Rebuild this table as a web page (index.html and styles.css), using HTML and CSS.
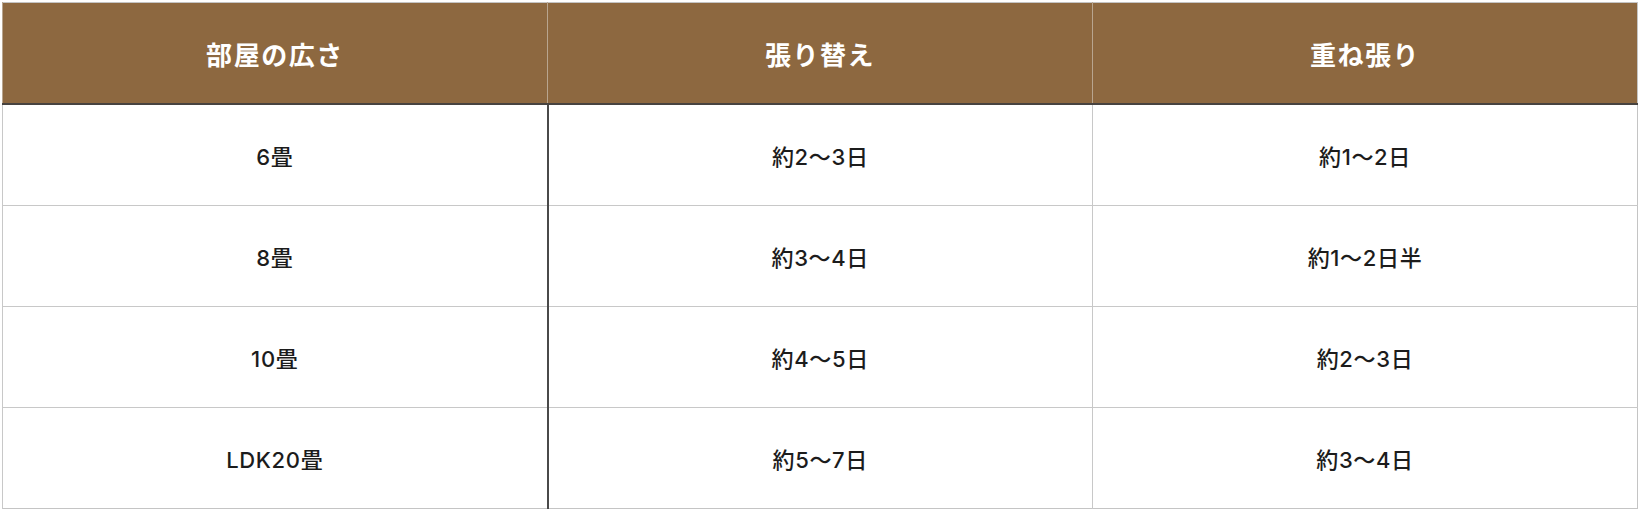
FILE: index.html
```html
<!DOCTYPE html>
<html lang="ja">
<head>
<meta charset="utf-8">
<title>工期の目安</title>
<link rel="stylesheet" href="styles.css">
</head>
<body>
<table class="spec">
  <thead>
    <tr>
      <th class="col-size">部屋の広さ</th>
      <th>張り替え</th>
      <th>重ね張り</th>
    </tr>
  </thead>
  <tbody>
    <tr><td class="col-size">6畳</td><td>約2〜3日</td><td>約1〜2日</td></tr>
    <tr><td class="col-size">8畳</td><td>約3〜4日</td><td>約1〜2日半</td></tr>
    <tr><td class="col-size">10畳</td><td>約4〜5日</td><td>約2〜3日</td></tr>
    <tr><td class="col-size">LDK20畳</td><td>約5〜7日</td><td>約3〜4日</td></tr>
  </tbody>
</table>
</body>
</html>
```
FILE: styles.css
```css
html, body {
  margin: 0;
  padding: 0;
  background: #ffffff;
}
body {
  padding: 2px;
  font-family: "Inter", "Noto Sans CJK JP", sans-serif;
}
.spec {
  width: 100%;
  border-collapse: collapse;
  table-layout: fixed;
  border: 1px solid #c4c4c4;
}
.spec th {
  background: #8d6840;
  color: #ffffff;
  font-family: "Noto Sans CJK JP", sans-serif;
  font-weight: 600;
  font-size: 26px;
  letter-spacing: 0.06em;
  height: 100px;
  text-align: center;
  vertical-align: middle;
  border-left: 1px solid #b8a58f;
  border-bottom: 2px solid #474340;
  padding: 0;
}
.spec td {
  height: 100px;
  text-align: center;
  vertical-align: middle;
  font-size: 22px;
  font-weight: 500;
  letter-spacing: 0.03em;
  color: #1c1c1c;
  border-top: 1px solid #c8c8c8;
  border-left: 1px solid #c8c8c8;
  padding: 0;
}
.spec td.col-size {
  border-right: 2px solid #4a4a4a;
}
```
